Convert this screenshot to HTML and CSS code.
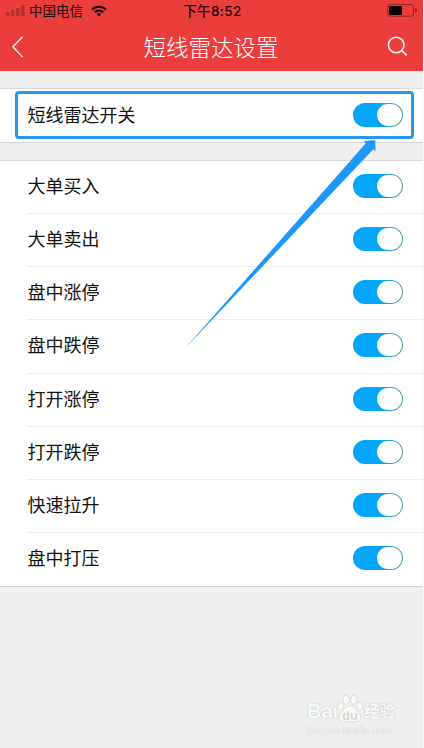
FILE: index.html
```html
<!DOCTYPE html>
<html lang="zh-CN">
<head>
<meta charset="utf-8">
<title>短线雷达设置</title>
<link rel="stylesheet" href="styles.css">
</head>
<body>
<div class="screen">
  <header class="header">
    <div class="status">
      <div class="carrier">
        <svg class="signal" width="19" height="12" viewBox="0 0 19 12"><path d="M0 7h3.5v4H0zM5 5h3.5v6H5zM10 3h3.5v8H10zM15 0h3.5v11H15z"/></svg>
        <span class="operator">中国电信</span>
        <svg class="wifi" width="16" height="12" viewBox="0 0 16 12"><g fill="none" stroke="#22090a" stroke-width="2.2"><path d="M1 4.6a10 10 0 0 1 14 0"/><path d="M3.7 7.4a6.1 6.1 0 0 1 8.6 0"/></g><path fill="#22090a" d="M5.5 9.1a3.6 3.6 0 0 1 5 0L8 11.6z"/></svg>
      </div>
      <span class="time">下午8:52</span>
      <svg class="battery" width="31" height="13" viewBox="0 0 31 13"><rect x=".6" y=".6" width="26" height="11.6" rx="2.6" fill="none" stroke="#8e2424"/><rect x="2" y="2" width="13" height="9" rx="1" fill="#0c0203"/><path d="M28 4.2q2 .6 2 2.2t-2 2.2z" fill="#8e2424"/></svg>
    </div>
    <nav class="nav">
      <svg class="back" width="12" height="22" viewBox="0 0 12 22"><path d="M10.6.7.9 10.8l9.7 10.3"/></svg>
      <h1>短线雷达设置</h1>
      <svg class="search" width="21" height="21" viewBox="0 0 21 21"><circle cx="9.2" cy="9" r="7.8"/><path d="m14.7 14.5 5 4.8"/></svg>
    </nav>
  </header>
  <main>
    <section class="group master">
      <div class="row"><span>短线雷达开关</span><i class="switch"></i></div>
      <div class="highlight"></div>
    </section>
    <section class="group list">
      <div class="row"><span>大单买入</span><i class="switch"></i></div>
      <div class="row"><span>大单卖出</span><i class="switch"></i></div>
      <div class="row"><span>盘中涨停</span><i class="switch"></i></div>
      <div class="row"><span>盘中跌停</span><i class="switch"></i></div>
      <div class="row"><span>打开涨停</span><i class="switch"></i></div>
      <div class="row"><span>打开跌停</span><i class="switch"></i></div>
      <div class="row"><span>快速拉升</span><i class="switch"></i></div>
      <div class="row"><span>盘中打压</span><i class="switch"></i></div>
    </section>
  </main>
  <svg class="arrow" width="424" height="748" viewBox="0 0 424 748"><path fill="#1d97fa" d="M184.5 349 365.8 143.2l-2.2-2L375.3 140l.2 11-2.2-1.8z"/></svg>
  <div class="watermark">
    <div class="brand">
      <span class="bai">Bai</span>
      <svg width="26" height="29" viewBox="0 0 26 29"><g fill="#fafafa" stroke="#d8d8d8" stroke-width=".8"><ellipse cx="3.8" cy="12.5" rx="3" ry="4"/><ellipse cx="9.2" cy="5.8" rx="3" ry="4.4"/><ellipse cx="16.8" cy="5.8" rx="3" ry="4.4"/><ellipse cx="22.4" cy="12.2" rx="2.9" ry="4"/><path d="M13 11.8c3.8 0 5.5 4.1 8.4 6.7 3.7 3.5 2.6 9.2-2.5 9.2H7c-5.2 0-6.3-5.6-2.5-9.2 3-2.7 4.7-6.7 8.5-6.7z"/></g><text x="13" y="25.5" text-anchor="middle" class="du">du</text></svg>
      <span class="jingyan">经验</span>
    </div>
    <div class="url">jingyan.baidu.com</div>
  </div>
</div>
</body>
</html>
```
FILE: styles.css
```css
* { box-sizing: border-box; }
body {
  margin: 0;
  background: #fff;
  font-family: "Noto Sans CJK SC", sans-serif;
  color: #111;
}
.screen {
  position: relative;
  width: 424px;
  height: 748px;
  overflow: hidden;
  background: #efefef;
  border-right: 1px solid #f7f8fc;
}
.header { height: 71px; background: #ec3d3d; }
.status {
  display: grid;
  grid-template-columns: 1fr auto 1fr;
  align-items: center;
  height: 21px;
  padding: 0 5px 0 6px;
  color: #22090a;
  font-size: 13.5px;
  line-height: 20px;
}
.carrier { display: flex; align-items: center; }
.signal { fill: #b92f30; }
.operator { margin: 0 8px 0 4px; padding-bottom: 1px; }
.time {
  padding-left: 1px;
  font-family: Inter, "Noto Sans CJK SC", sans-serif;
  font-size: 13.5px;
  font-weight: 500;
  letter-spacing: .4px;
}
.battery { justify-self: end; }
.nav {
  display: grid;
  grid-template-columns: 1fr auto 1fr;
  align-items: center;
  height: 50px;
  padding: 0 15px 0 12px;
}
.nav svg { fill: none; stroke: #fff; stroke-width: 1.3; }
.nav .back { margin-top: 1px; }
.nav .search { justify-self: end; stroke-width: 1.6; }
h1 {
  margin: 0;
  padding: 0 0 1px 2px;
  color: #fff;
  font-size: 22.5px;
  font-weight: 300;
  line-height: 34px;
}
.group {
  background: #fff;
  border-top: 1px solid #d9d9d9;
  border-bottom: 1px solid #d2d2d2;
}
.master { position: relative; height: 55px; margin-top: 17px; }
.list { margin-top: 17px; }
.row {
  display: flex;
  align-items: center;
  justify-content: space-between;
  height: 53.15px;
  margin-left: 27px;
  padding: 0 20px 2px 0;
  font-size: 18px;
  line-height: 26px;
}
.row span { padding: 0 0 1px .5px; }
.list .row span { padding-bottom: 2px; }
.list .row { border-bottom: 1px solid #ededed; }
.list .row:last-child { border-bottom-color: #fff; }
.switch {
  display: flex;
  justify-content: flex-end;
  width: 50px;
  height: 24px;
  padding: 1px;
  border-radius: 12px;
  background: linear-gradient(90deg, #04a6fa 60%, #4b9cac 85%);
}
.switch::after {
  content: "";
  width: 25px;
  height: 22px;
  border-radius: 12px;
  background: #fff;
}
.highlight {
  position: absolute;
  left: 15px;
  top: 2px;
  width: 399px;
  height: 48px;
  border: 3px solid #2896ee;
  border-radius: 4px;
}
.arrow { position: absolute; left: 0; top: 0; }
.watermark {
  position: absolute;
  left: 307px;
  top: 693px;
  width: 92px;
  color: #fafafa;
}
.brand { display: flex; align-items: flex-end; height: 30px; }
.bai, .jingyan {
  text-shadow: 0 0 1px #bbb, 0 0 1px #c4c4c4;
}
.bai {
  width: 30px;
  font: bold 20px/24px "Liberation Sans", sans-serif;
}
.du {
  font: bold 13px "Liberation Sans", sans-serif;
  fill: #d6d6d6;
}
.jingyan {
  margin-left: 1px;
  font-size: 15.5px;
  font-weight: 700;
  line-height: 25px;
}
.url {
  color: #f6f6f6;
  font: 10.5px/14px "Liberation Sans", sans-serif;
  text-shadow: 0 0 1px #c8c8c8, 0 0 1px #d4d4d4;
}
```
